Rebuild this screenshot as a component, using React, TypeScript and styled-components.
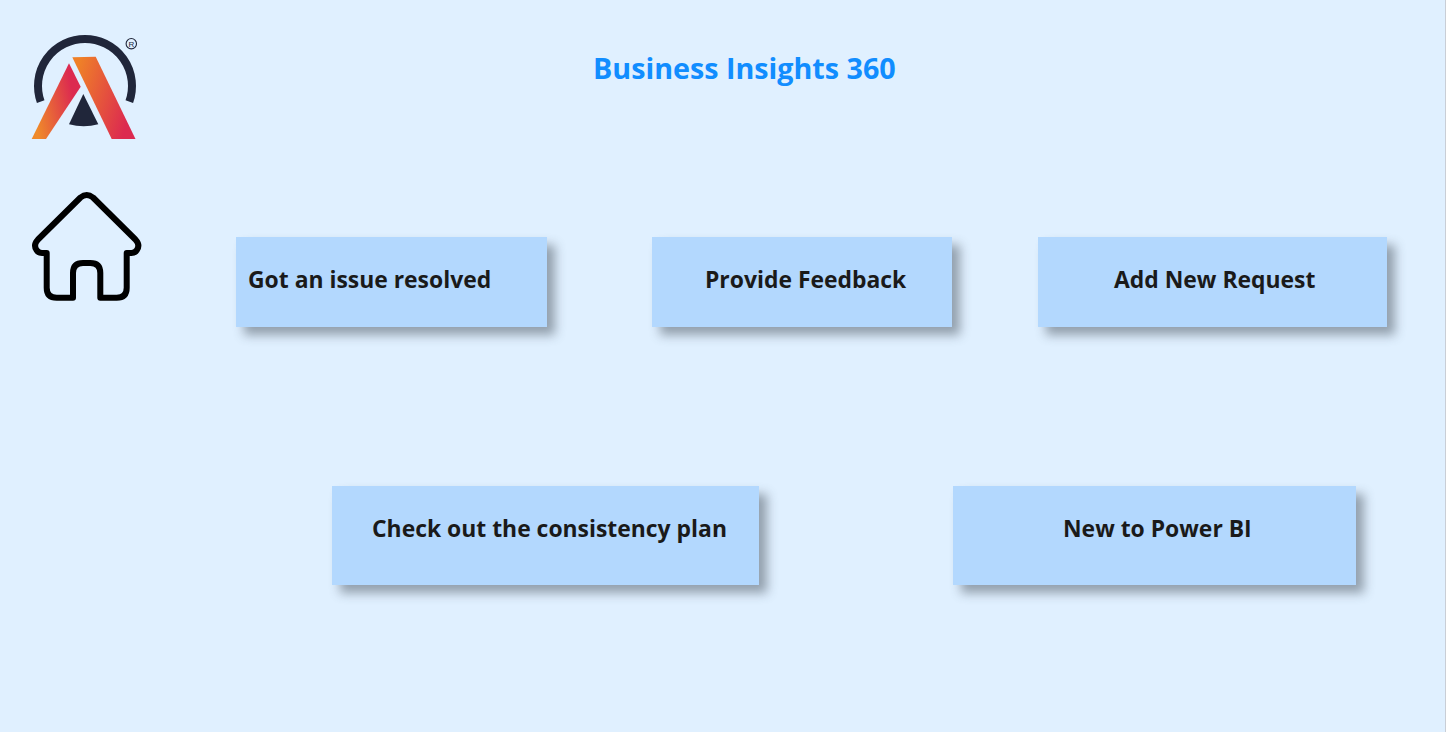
import React from "react";
import styled, { createGlobalStyle } from "styled-components";

const Global = createGlobalStyle`
  html, body { margin: 0; padding: 0; height: 100%; background: #fff; }
  #root { height: 100%; }
`;

const Page = styled.div`
  box-sizing: border-box;
  width: 1449px;
  height: 732px;
  padding-right: 3px;
  overflow: hidden;
`;

const Canvas = styled.main`
  box-sizing: border-box;
  width: 100%;
  height: 100%;
  background: #e0f0ff;
  display: flex;
  font-family: "Open Sans", "Noto Sans", sans-serif;
  border-right: 1px solid #c9ced6;
`;

const Sidebar = styled.aside`
  width: 236px;
  flex: none;
  box-sizing: border-box;
  padding: 34px 0 0 31px;
  display: flex;
  flex-direction: column;
  gap: 51px;
`;

const Content = styled.div`
  flex: 1;
  display: flex;
  flex-direction: column;
`;

const Title = styled.h1`
  margin: 0;
  height: 237px;
  box-sizing: border-box;
  padding: 49px 0 0 357px;
  font-size: 28.7px;
  line-height: 38px;
  font-weight: 700;
  color: #118dff;
  white-space: nowrap;
`;

const Row = styled.div<{ $left: number; $height: number; $top?: number }>`
  display: flex;
  margin-top: ${(p) => p.$top ?? 0}px;
  padding-left: ${(p) => p.$left}px;
  height: ${(p) => p.$height}px;
`;

const ActionButton = styled.button<{ $width: number; $pad: number; $lift: number; $after?: number }>`
  box-sizing: border-box;
  flex: none;
  width: ${(p) => p.$width}px;
  height: 100%;
  margin-right: ${(p) => p.$after ?? 0}px;
  padding: 0 0 ${(p) => p.$lift}px ${(p) => p.$pad}px;
  border: 0;
  background: #b3d8fe;
  box-shadow: 8px 8px 10px rgba(60, 70, 80, 0.47);
  color: #1a1a1a;
  font: 700 22.9px/30px "Open Sans", "Noto Sans", sans-serif;
  text-align: left;
  white-space: nowrap;
`;

const Logo = () => (
  <svg width="108" height="106" viewBox="0 0 108 106" style={{ display: "block" }}>
    <defs>
      <linearGradient id="lg" x1="0" y1="0.7" x2="1" y2="0.4">
        <stop offset="0.05" stopColor="#ef8a2a" />
        <stop offset="0.85" stopColor="#dc2a50" />
      </linearGradient>
      <linearGradient id="rg" x1="0" y1="0.2" x2="1" y2="0.6">
        <stop offset="0.05" stopColor="#ef8028" />
        <stop offset="0.95" stopColor="#dc2a50" />
      </linearGradient>
    </defs>
    <path d="M9.7 67.7 A47 47 0 1 1 98.3 67.7" fill="none" stroke="#20263a" strokeWidth="8" />
    <path d="M0.7 105 L38 29.3 L49.7 52.7 L15 105 Z" fill="url(#lg)" />
    <path d="M41.3 23.3 L64.7 22.7 L104.5 105 L80.7 105 Z" fill="url(#rg)" />
    <path d="M52.3 60 L38 90.3 Q52.7 94 67.3 90.3 Z" fill="#20263a" />
    <circle cx="100.3" cy="9.7" r="5.2" fill="none" stroke="#20263a" strokeWidth="1.1" />
    <text x="100.3" y="12.6" fontSize="8" textAnchor="middle" fontFamily="Liberation Sans, sans-serif" fill="#20263a">R</text>
  </svg>
);

const HomeIcon = () => (
  <svg width="112" height="112" viewBox="0 0 112 112" style={{ display: "block" }}>
    <path
      d="M49.5 6.5 L7 48.5 Q2 54 5.5 59 Q7.5 62 11 62 L15.7 62 L15.7 96.7 Q15.7 106.7 25.7 106.7 L42 106.7 L42 82 Q42 72 52 72 L59.3 72 Q69.3 72 69.3 82 L69.3 106.7 L85.7 106.7 Q95.7 106.7 95.7 96.7 L95.7 62 L100.4 62 Q103.9 62 105.9 59 Q109.4 54 104.4 48.5 L62 6.5 Q55.7 1.5 49.5 6.5 Z"
      fill="none"
      stroke="#000"
      strokeWidth="6"
      strokeLinejoin="round"
    />
  </svg>
);

export default function App() {
  return (
    <Page>
      <Global />
      <Canvas>
        <Sidebar>
          <Logo />
          <HomeIcon />
        </Sidebar>
        <Content>
          <Title>Business Insights 360</Title>
          <Row $left={0} $height={90}>
            <ActionButton $width={311} $pad={12} $lift={5} $after={105}>Got an issue resolved</ActionButton>
            <ActionButton $width={300} $pad={53} $lift={5} $after={86}>Provide Feedback</ActionButton>
            <ActionButton $width={349} $pad={76} $lift={5}>Add New Request</ActionButton>
          </Row>
          <Row $left={96} $height={99} $top={159}>
            <ActionButton $width={427} $pad={40} $lift={13} $after={194}>Check out the consistency plan</ActionButton>
            <ActionButton $width={403} $pad={110} $lift={13}>New to Power BI</ActionButton>
          </Row>
        </Content>
      </Canvas>
    </Page>
  );
}
